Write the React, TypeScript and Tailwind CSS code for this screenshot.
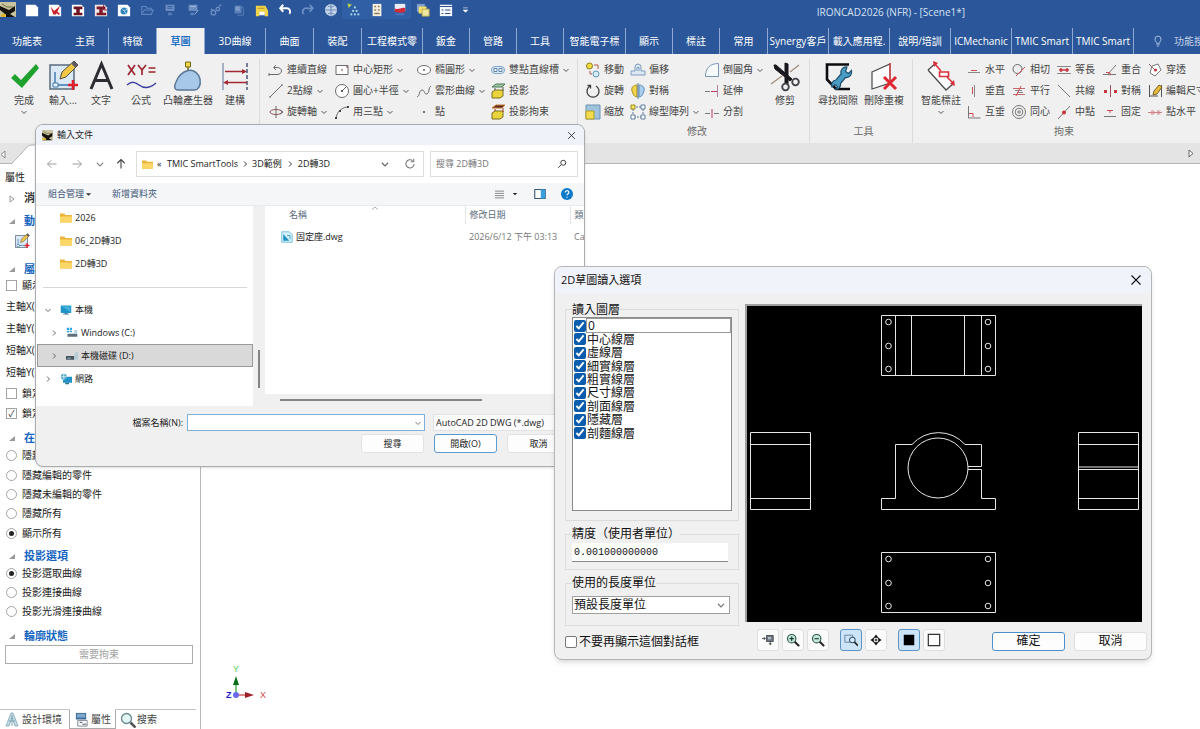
import React from "react";
import type { ReactNode } from "react";

const GLYPHS: Record<string, ReactNode> = {
  /* quick access, 16 x 16 */
  app: (<><rect width="16" height="15" fill="#c9c4a0" /><path d="M0 4l9 4 6-4v5l-5 3 5 3H1l4-3-5-4z" fill="#16130c" /><path d="M2 2l5 3h6" stroke="#6f6a4a" fill="none" /><path d="M1 12h5v3H1z" fill="#e0b52e" /></>),
  newdoc: <path d="M1 2h11l3 3v10H1z" fill="#fff" />,
  redv: (<><path d="M1 2h11l3 3v10H1z" fill="#fff" /><path d="M3 4l4 5 7-6-5 10H6z" fill="#c8202c" /><path d="M8 9l5 4" stroke="#c8202c" strokeWidth="2" /></>),
  redi: (<><path d="M1 2h11l3 3v10H1z" fill="#fff" /><path d="M3 4h10v3H10v4h3v3H3v-3h3V7H3z" fill="#6e1420" /></>),
  redi2: (<><path d="M1 2h11l3 3v10H1z" fill="#f3e6e8" /><path d="M3 4h10v3h-3v4h4v3H3v-3h3V7H3z" fill="#7d1a2a" /><path d="M11 2v6h4" fill="none" stroke="#7d1a2a" /></>),
  camdoc: (<><path d="M1 2h11l3 3v10H1z" fill="#fff" /><circle cx="8" cy="9" r="4" fill="#2f82b5" /><path d="M3 4l5 5 5-3M8 9l3 4" stroke="#b7dcf0" fill="none" /></>),
  open: <path d="M2 4h5l1 2h5v2h2l-2 5H2zM3 11l2-3h8" fill="none" stroke="#5f84bd" strokeWidth="1.300" />,
  save: (<><path d="M3 2h10v7H3z" fill="#6d8fc4" /><path d="M5 4h6M5 6h6" stroke="#2b579a" /><path d="M6 11h4v3H6z" fill="#5a7fb8" /></>),
  saveas: (<><path d="M3 2h10v7H3z" fill="#6d8fc4" /><path d="M5 4h6M10 13l4-5" stroke="#a9bfe0" /><path d="M5 11h4v3H5z" fill="#5a7fb8" /></>),
  link: (<g fill="none" stroke="#6d8fc4" strokeWidth="1.400"><circle cx="5" cy="11" r="2.600" /><circle cx="10" cy="7" r="2" /><path d="M11 4l3-2M2 7l3 1" /></g>),
  cube: (<><path d="M3 3h8v9H3z" fill="#5a7fb8" /><path d="M4 4h5v5H4z" fill="#7d9ccb" /><path d="M11 5h2v9H6" fill="none" stroke="#5a7fb8" /></>),
  print: (<><path d="M1 3h11l3 6v6h-4v-3H5v3H1z" fill="#f0d34a" /><path d="M5 10h6v4H5z" fill="#fff" /><path d="M3 6h8" stroke="#a98e20" /></>),
  undo: <path d="M6 2L2.500 6 6 10M3 6h6.500a4 4 0 0 1 3.500 6.500" fill="none" stroke="#fff" strokeWidth="2.200" />,
  redo: <path d="M10 2l3.500 4-3.500 4M13 6H7a4 4 0 0 0-4 6.500" fill="none" stroke="#6d8fc4" strokeWidth="2" />,
  sphere: (<><circle cx="8" cy="8" r="7" fill="#c6d4e8" /><path d="M1 8h14M8 1v14M4 3c2 2 6 2 8 0M4 13c2-2 6-2 8 0" stroke="#5f82b5" fill="none" /></>),
  tree: (<><path d="M1 1l4 1-3 3z" fill="#d9e36a" stroke="#9fc14a" /><g fill="#a8d8e8"><circle cx="9" cy="5" r="1.200" /><circle cx="7" cy="9" r="1.200" /><circle cx="11" cy="9" r="1.200" /><circle cx="5" cy="13" r="1.200" /><circle cx="9" cy="13" r="1.200" /><circle cx="13" cy="13" r="1.200" /></g></>),
  sheet: (<><path d="M3 1h10v14H3z" fill="#f3f0e2" /><path d="M5 4h2M9 4h2M5 8h2M9 8h2M5 12h6" stroke="#8f7a50" strokeWidth="1.500" /></>),
  flag: (<><path d="M2 1h12v8H2z" fill="#e8eef8" /><path d="M2 6c4 3 8-2 12 0v4c-4 2-8 1-12 0z" fill="#d12b3a" /><path d="M3 13h10" stroke="#4a76bd" strokeWidth="2" /></>),
  layers: (<><path d="M1 1h9v9H1z" fill="#7f9ed0" /><path d="M3 4h9v8H3z" fill="#f2e06a" /><path d="M7 7h8v8H7z" fill="#efe6a0" stroke="#b6a64a" /></>),
  listwin: (<><path d="M1 2h14v13H1z" fill="#f4f7fb" /><path d="M1 4h14M3 8h2M7 8h6M3 12h2M7 12h6" stroke="#33538a" strokeWidth="1.300" /></>),
  more: <path d="M4 5h8M4 9h8l-4 4z" stroke="#fff" fill="#fff" strokeWidth="1" />,

  /* ribbon, 32 x 32 */
  ok: <path d="M3 18l4-4 6 6L28 4l3 4-17 20z" fill="#1fa12e" />,
  sketch: (<><path d="M3 5h24v24H3z" fill="#dbe8f5" stroke="#5a6b7d" strokeWidth="1.500" /><path d="M8 12v13h13" fill="none" stroke="#3d78ad" strokeWidth="1.400" /><path d="M6 23h5v4H6z" fill="#e9f3fb" stroke="#3d78ad" /><path d="M13 19l2-7L27 1l4 4-12 12z" fill="#f2c744" stroke="#54504a" /><path d="M27 1l4 4-3 2.500L24.500 4z" fill="#5c5c66" /><path d="M26 20v10M21 25h10" stroke="#e0202a" strokeWidth="2.600" /></>),
  bigA: (<path d="M6 29L16.500 4 27 29M10 20.500h13" fill="none" stroke="#2c2c33" strokeWidth="3" />),
  formula: (<><g fill="none" stroke="#9c2530" strokeWidth="1.700"><path d="M3 5l7 10M10 5L3 15M13 5l4 5 4-5M17 10v5M23.500 8h7M23.500 12h7" /></g><path d="M2 25c5-4 8-3 12 0s10 4 17-2" fill="none" stroke="#3a3aa0" strokeWidth="1.500" /></>),
  cam: (<><path d="M13.500 2h5v5h-5z" fill="#f0d743" stroke="#71661c" /><path d="M16 7v4" stroke="#71661c" strokeWidth="1.500" /><path d="M16 10.500C22 9 27 14 28 19c1 6-1 11-6 11H6c-4 0-4-4-2-8 2-5 6-10 12-11.500z" fill="#a8c8ea" stroke="#5b7796" strokeWidth="1.500" /></>),
  construct: (<><path d="M4 3v27" stroke="#7d8dab" strokeWidth="1.300" /><path d="M28 3v27" stroke="#555f85" strokeWidth="1.600" strokeDasharray="4 2" /><path d="M6 11.500h20M8 22.500h20" stroke="#a12a35" strokeWidth="1.300" /><path d="M23 9l5 2.500-5 2.500zM9 20l-5 2.500L9 25z" fill="#a12a35" /></>),
  trim: (<><path d="M2 24l11-8M21 12L30 5" stroke="#a08a78" strokeWidth="1.200" /><path d="M5 5l2 0 16 14-2 2L6 9zM16 3l3 1 0 20-3-1z" fill="#17171c" stroke="#17171c" /><g fill="none" stroke="#3f4147" strokeWidth="1.800"><circle cx="16.500" cy="27" r="3.300" /><circle cx="26.500" cy="22" r="3.300" /></g></>),
  gap: (<><path d="M27 4.500H5v15l9 9.500h14" fill="none" stroke="#0c0c10" strokeWidth="2.600" /><path d="M25 7a5.500 5.500 0 0 0-6 7l-5 6a5 5 0 0 0-4 7l3-2.500 2.500 2-2 3a5 5 0 0 0 5-6l5-6a5.500 5.500 0 0 0 6-7l-3 3-3-2z" fill="#4a9cc4" stroke="#20506e" strokeWidth="1.200" /></>),
  deldup: (<><path d="M4 12l18-8v19L4 29z" fill="#fafafa" stroke="#4a4a4a" strokeWidth="1.200" /><path d="M22 3v22" stroke="#e04048" strokeWidth="1.400" /><path d="M16 17l12 12M28 17L16 29" stroke="#e0272f" strokeWidth="3" /></>),
  smartdim: (<><path d="M3 10l18 20 8-7L11 3z" fill="#fff" /><path d="M3 10l18 20 8-7M3 10l8-7" fill="none" stroke="#4c4c50" strokeWidth="1.300" /><path d="M10 4l6 7M22 17l6 6" stroke="#d83038" strokeWidth="1.600" /><path d="M14.500 12h9v4.500h-9z" fill="#fff" stroke="#d83038" strokeWidth="1.600" /><path d="M8 1l5 2-4 4zM30 26l-1-6-4 4z" fill="#d83038" /></>),

  /* ribbon, 16 x 16 */
  pline: <path d="M1 12.500h8c6 0 6-7 0-7H6M8 3L5.500 5.500 8 8M1 11v3" fill="none" stroke="#6a6a70" />,
  line: <path d="M2 14L14 2M1 14h2M13 2h2" fill="none" stroke="#6a6a70" />,
  axis: (<><ellipse cx="8" cy="8" rx="6" ry="2.500" fill="none" stroke="#8f5258" /><path d="M8 2v12M12 6l3 2-3 2" fill="none" stroke="#6a6a70" /></>),
  crect: (<><path d="M2 3.500h12v9H2z" fill="#fff" stroke="#6a6a70" /><path d="M7 8h2M12 5h2" stroke="#8f3a42" /></>),
  ccirc: (<><circle cx="8" cy="8" r="6.500" fill="#fff" stroke="#6a6a70" /><path d="M8 8l4-4" stroke="#6a6a70" /><circle cx="8" cy="8" r="1" fill="#333" /></>),
  arc3: (<><path d="M2 14C3 8 7 4 13 3" fill="none" stroke="#6a6a70" /><path d="M1 13h2v2H1zM5 6h2v2H5zM13 2h2v2h-2z" fill="#46464a" /></>),
  ellipse: (<><ellipse cx="8" cy="8" rx="6.500" ry="4.500" fill="#fff" stroke="#6a6a70" /><path d="M8 7v2M7 8h2" stroke="#6a6a70" /></>),
  spline: <path d="M1 14c3-1 2-7 5-7s2 5 5 4 1-7 4-8" fill="none" stroke="#6a6a70" />,
  point: <path d="M7 7h2v2H7z" fill="#777" />,
  slot: (<><rect x="1.500" y="4.500" width="13" height="7" rx="3.500" fill="#dcebf8" stroke="#7da4c9" /><path d="M4 6.500h3v3H4zM9 6.500h3v3H9z" fill="#fff" stroke="#5d86ad" /></>),
  project: (<><path d="M2 4l4-3h9l-3 3z" fill="#9fc7a5" stroke="#4c7a57" /><path d="M2 9l3-2h8v6l-3 2H2z" fill="#e9d43c" stroke="#7b6f21" /><path d="M5 7v-2M13 8V4" stroke="#555" /></>),
  projcon: (<><path d="M2 4l4-3h9l-3 3z" fill="#5a2b20" stroke="#c77b35" /><path d="M2 9l3-2h8v6l-3 2H2z" fill="#e9d43c" stroke="#7b6f21" /><path d="M5 7v-2M13 8V4" stroke="#b03a2a" /></>),
  move: (<><circle cx="4.500" cy="4" r="3" fill="#f0dc3c" stroke="#8d8122" /><circle cx="11" cy="12" r="3" fill="#d9eaf7" stroke="#6096be" /><path d="M9 3h4v4M5 9v3h2" fill="none" stroke="#b5544b" /></>),
  rotate: <path d="M5 3A6 6 0 1 0 11 3M2.500 2.500h3v3" fill="none" stroke="#3c3c40" strokeWidth="1.300" />,
  scale: (<><path d="M1 1h14v14H1z" fill="#9fc2dd" stroke="#6d93b3" /><path d="M1 7h8v8H1z" fill="#f2dc4c" stroke="#b09d25" /></>),
  offset: (<g fill="#dbe8f4" stroke="#7f9dbd"><path d="M5 9V5a3 3 0 0 1 6 0v4h4v4H1V9z" /><path d="M7 9V5.500h2V9" fill="none" /></g>),
  mirror: (<><path d="M7 2C3 2 1 5 2 8s2 6 5 6z" fill="#f0d44a" stroke="#a78f28" /><path d="M9 2c4 0 6 3 5 6s-2 6-5 6z" fill="#a9cdec" stroke="#5e8fbb" /><path d="M8 0v16" stroke="#55779a" /></>),
  array: (<g fill="#fff" stroke="#5f7ba0"><path d="M3 3h10v10H3z" fill="none" strokeDasharray="2 1" /><path d="M1 1h4v4H1z" stroke="#9a8a1b" fill="#f4e765" /><path d="M11 1h4v4h-4zM1 11h4v4H1zM11 11h4v4h-4z" /></g>),
  fillet: <path d="M1.500 14.500C1.500 6 6 1.500 14.500 1.500v13z" fill="#f7fafc" stroke="#7796b4" />,
  extend: (<><path d="M1 8.500h5" stroke="#777" /><path d="M7 8.500h6" stroke="#c03c66" /><path d="M13.500 2v12" stroke="#b880a0" /></>),
  split: (<><path d="M1 9.500h5M10 9.500h5" stroke="#777" /><path d="M8 5v9" stroke="#c03c66" /></>),
  horiz: (<><path d="M2 10.500h12" stroke="#888" /><path d="M5 8.500h6" stroke="#d24a52" /></>),
  vert: (<><path d="M8.500 2v12" stroke="#888" /><path d="M6.500 4v7" stroke="#d24a52" /></>),
  perp: (<><path d="M2.500 2v12h12" fill="none" stroke="#777" /><path d="M3 9.500h4V13" fill="none" stroke="#d24a52" /></>),
  tangent: (<><circle cx="6.500" cy="7" r="4.500" fill="none" stroke="#666" /><path d="M5 14L14 5" stroke="#d24a52" /></>),
  para: (<><path d="M2 5.500h12M2 11.500h12" stroke="#c46a70" /><path d="M4 7.500h7M6 9.500h6" stroke="#888" /><path d="M5 13l5-10" stroke="#d24a52" /></>),
  conc: (<g fill="none" stroke="#777"><circle cx="8" cy="8" r="6.500" /><circle cx="8" cy="8" r="3.800" /><circle cx="8" cy="8" r="1.200" /></g>),
  equal: (<><path d="M1 4.500h14M1 11.500h14" stroke="#888" /><path d="M3 8h10M5 6v4M11 6v4" stroke="#c8343c" strokeWidth="1.500" /></>),
  colin: <path d="M2 2l12 12" stroke="#777" />,
  mid: (<><path d="M2 15L14 2" stroke="#777" /><circle cx="8" cy="8.500" r="2" fill="#c8343c" /></>),
  coin: (<><path d="M1 12.500h13M6 12L14 3" fill="none" stroke="#777" /><path d="M4 10.500h4v3" fill="none" stroke="#d24a52" /></>),
  sym: (<><path d="M8.500 2v12" stroke="#a05058" /><path d="M2 7h3v3H2zM12 7h3v3h-3z" fill="#c8343c" /></>),
  fix: (<><path d="M2 12.500h12" stroke="#777" /><path d="M5 6.500h6M8 7v2" stroke="#d24a52" /></>),
  pierce: (<><path d="M5 4l6-2 3 6-6 6-5-3z" fill="#fff" stroke="#777" /><path d="M2 2l6 6" fill="none" stroke="#a06a6a" /><circle cx="8.500" cy="8" r="1.500" fill="#c8343c" /></>),
  editdim: (<><path d="M2.500 2v12M14.500 2v12M2 13h9" stroke="#555" fill="none" /><path d="M6 12l1-4 5-6 3 2-5 7z" fill="#e7b93c" stroke="#7a6220" /></>),
  ptH: <path d="M1 8.500h14M5 6v5M11 6v5M6 6.500l2 2-2 2M13 6.500l-2 2 2 2" fill="none" stroke="#d28088" />,

  /* dialogs */
  pc: (<><rect x="1" y="2" width="14" height="10" rx="1" fill="#1d93c8" /><path d="M2 3h12v8z" fill="#55c3e6" opacity=".6" /><path d="M6 12h4v1h2v1H4v-1h2z" fill="#3f7f9b" /></>),
  winDrive: (<><path d="M1 1h3v3H1zM5 1h3v3H5zM1 5h3v2H1zM5 5h3v2H5z" fill="#2aa3df" /><path d="M2 9h13v4H2z" fill="#5d6f7c" /><path d="M11 4h4v5h-4z" fill="#b7d4e4" /></>),
  drive: (<><path d="M0 8h11v5H0z" fill="#4a545c" /><path d="M11 8l1-5h4v10h-5z" fill="#b5cbd8" /><path d="M2 11h4" stroke="#9fe0ff" /></>),
  network: (<><rect x="4" y="5" width="12" height="8" fill="#1d93c8" /><circle cx="5" cy="5" r="4" fill="#58a9c8" /><path d="M1 5h8M5 1v8" stroke="#e0f3fa" /><path d="M7 13h5v2H7z" fill="#2a6f8c" /></>),
  folder: (<><path d="M0 2h6l1 2h9v10H0z" fill="#e9b53a" /><path d="M0 6h16v8H0z" fill="#fbd768" /></>),
  dwg: (<><path d="M1 1h10l4 4v10H1z" fill="#d4effa" stroke="#5bb3d6" /><path d="M3 4l8 9H3z" fill="#2191c4" /><path d="M8 6h4v5" stroke="#2191c4" fill="none" /></>),
  left: <path d="M14 8H2M7 3L2 8l5 5" fill="none" stroke="currentColor" strokeWidth="1.300" />,
  right: <path d="M2 8h12M9 3l5 5-5 5" fill="none" stroke="currentColor" strokeWidth="1.300" />,
  up: <path d="M8 14V2M3 7l5-5 5 5" fill="none" stroke="currentColor" strokeWidth="1.500" />,
  down: <path d="M3 6l5 5 5-5" fill="none" stroke="currentColor" strokeWidth="1.800" />,
  next: <path d="M6 3l5 5-5 5" fill="none" stroke="currentColor" strokeWidth="1.800" />,
  caretUp: <path d="M2 11l6-5 6 5" fill="none" stroke="currentColor" strokeWidth="1.300" />,
  refresh: <path d="M13.500 8a5.500 5.500 0 1 1-2-4.500M13 1v4H9" fill="none" stroke="currentColor" strokeWidth="1.400" />,
  search: (<><circle cx="10" cy="6" r="4" fill="none" stroke="currentColor" strokeWidth="1.600" /><path d="M7 9l-5 5" stroke="currentColor" strokeWidth="1.600" /></>),
  close: <path d="M2 2l12 12M14 2L2 14" stroke="currentColor" strokeWidth="1.500" />,
  rows: <path d="M0 2h16M0 6h16M0 10h16M0 14h16" stroke="#777" strokeWidth="1.500" />,
  pane: (<><path d="M1 2h14v12H1z" fill="#fff" stroke="#3c5b78" strokeWidth="1.500" /><path d="M9 2h6v12H9z" fill="#3aa0dd" /></>),
  help: (<><circle cx="8" cy="8" r="8" fill="#0f79c9" /><path d="M5.500 6a2.500 2.300 0 1 1 3.500 2c-.8.400-1 .8-1 1.800M8 11.500v1.500" fill="none" stroke="#fff" strokeWidth="1.500" /></>),
  dropTri: <path d="M2 5h12l-6 6z" fill="currentColor" />,
  fit: (<><path d="M6 2h9v8H6z" fill="#6f7782" stroke="#33363c" /><path d="M8 4h4v3H8z" fill="#b9c0c8" /><path d="M0 6h5M3 4v4M11 10v5M9 13h4" stroke="#333" fill="none" /></>),
  zoomIn: (<><circle cx="6.500" cy="6.500" r="4.800" fill="#c8e8da" stroke="#2c5a4b" strokeWidth="1.300" /><path d="M4 6.500h5M6.500 4v5" stroke="#174031" strokeWidth="1.300" /><path d="M10 10l5 5" stroke="#222" strokeWidth="2.400" /></>),
  zoomOut: (<><circle cx="6.500" cy="6.500" r="4.800" fill="#c8e8da" stroke="#2c5a4b" strokeWidth="1.300" /><path d="M4 6.500h5" stroke="#174031" strokeWidth="1.300" /><path d="M10 10l5 5" stroke="#222" strokeWidth="2.400" /></>),
  zoomBox: (<><path d="M1 2.500h9v8H1z" fill="none" stroke="#5f7c99" /><circle cx="9.500" cy="8" r="3.200" fill="#d9ecfa" stroke="#33546f" strokeWidth="1.200" /><path d="M12 10.500l4 4" stroke="#222" strokeWidth="2" /></>),
  pan: <path d="M8 1l3 4H5zM8 15l3-4H5zM1 8l4-3v6zM15 8l-4-3v6zM7 7h2v2H7z" fill="#111" stroke="#111" strokeWidth=".5" />,
  blackSq: <path d="M2 2h12v12H2z" fill="#000" />,
  whiteSq: <path d="M1.500 1.500h13v13h-13z" fill="#fff" stroke="#333" strokeWidth="1.400" />,
  bulb: <path d="M6 11c0-2-2-3-2-5.500a4 4 0 0 1 8 0C12 8 10 9 10 11zM6 13h4M7 15h2" fill="none" stroke="#a9bfe0" strokeWidth="1.300" />,
  env: (<><path d="M7 1h2l5 13h-3l-3-9-3 9H2z" fill="#c4dde5" stroke="#7fa6b4" strokeWidth=".8" /><path d="M5 9h6M8 3v11" stroke="#7fa6b4" /></>),
  props: (<><path d="M2 1h11v7H2z" fill="#3f6b9a" /><path d="M3 2h9v4H3z" fill="#7fa8d0" /><path d="M4 9h10v6H4z" fill="#fff" stroke="#7b8894" /><path d="M6 11h3M9 13h4" stroke="#445" /></>),
  find: (<><circle cx="6.500" cy="6.500" r="5" fill="#e2f4f4" stroke="#6b8a90" strokeWidth="1.300" /><path d="M10.500 10.500l5 5" stroke="#555" strokeWidth="2.600" /></>),
};

function Icon({ n, big, cls }: { n: string; big?: boolean; cls?: string }) {
  const box = big ? "0 0 32 32" : "0 0 16 16";
  return (
    <svg viewBox={box} aria-hidden="true" className={"shrink-0 " + (cls ?? (big ? "size-8" : "size-4"))}>
      {GLYPHS[n]}
    </svg>
  );
}

const QUICK: [string, boolean?][] = [
  ["newdoc"], ["redv"], ["redi"], ["redi2"], ["camdoc"], ["open"], ["save"], ["saveas"], ["link"], ["cube"],
  ["print"], ["undo"], ["redo"], ["sphere"], ["tree", true], ["sheet", true], ["flag", true], ["layers"], ["listwin"],
];

const TABS: [string, string][] = [
  ["特徵", "w-12"], ["草圖", "w-12"], ["3D曲線", "w-[61px]"], ["曲面", "w-12"], ["裝配", "w-12"],
  ["工程模式零", "w-[61px]"], ["鈑金", "w-[47px]"], ["管路", "w-[47px]"], ["工具", "w-[47px]"], ["智能電子標", "w-[62px]"],
  ["顯示", "w-[47px]"], ["標註", "w-[47px]"], ["常用", "w-12"], ["Synergy客戶", "w-[61px]"], ["載入應用程.", "w-[61px]"],
  ["說明/培訓", "w-[61px]"], ["ICMechanic", "w-[61px]"], ["TMIC Smart", "w-[61px]"], ["TMIC Smart", "w-[61px]"],
];

function Big({ n, label, w, drop }: { n: string; label: string; w: string; drop?: boolean }) {
  return (
    <button className={"flex shrink-0 flex-col items-center pt-px leading-4 whitespace-nowrap " + w}>
      <Icon n={n} big />
      <span>{label}</span>
      {drop && <Icon n="down" cls="size-2" />}
    </button>
  );
}

type Item = [string, string, boolean?];
function Col({ items, w }: { items: Item[]; w: string }) {
  return (
    <div className={"flex shrink-0 flex-col " + w}>
      {items.map(([n, label, drop]) => (
        <button key={label} className="flex h-[21px] items-center gap-[3px] whitespace-nowrap">
          <Icon n={n} />
          <span>{label}</span>
          {drop && <Icon n="down" cls="size-2" />}
        </button>
      ))}
    </div>
  );
}

function Group({ children, label, cls }: { children: ReactNode; label: string; cls: string }) {
  return (
    <section className={"flex shrink-0 flex-col border-r border-[#dcdcdc] " + cls}>
      <div className="flex h-[63px]">{children}</div>
      <div className="h-[18px] text-center leading-[18px] text-[#6b6b6b]">{label}</div>
    </section>
  );
}

function Header() {
  return (
    <header className="bg-[#2b579a] text-white">
      <div className="flex h-7 items-start justify-between overflow-hidden">
        <div className="flex shrink-0 items-center">
          <Icon n="app" cls="mr-1 h-4 w-4" />
          {QUICK.map(([n, on]) => (
            <button key={n} aria-label={n} className={"flex h-[19px] w-[23px] items-center justify-center " + (on ? "bg-[#315fa6]" : "")}>
              <Icon n={n} cls="size-[14px]" />
            </button>
          ))}
          <button aria-label="more" className="flex w-4 justify-center"><Icon n="more" cls="size-[9px]" /></button>
        </div>
        <h1 className="mr-[235px] text-[10px] leading-6 whitespace-nowrap text-[#d5e1f3]">IRONCAD2026 (NFR) - [Scene1*]</h1>
      </div>
      <nav className="flex h-[26px] overflow-hidden text-[10px]">
        <button className="w-[62px] shrink-0 pr-2">功能表</button>
        <button className="w-[47px] shrink-0 border-r border-[#8ea9d2]">主頁</button>
        {TABS.map(([t, w], i) => (
          <button
            key={i}
            className={
              "shrink-0 overflow-hidden border-r border-[#8ea9d2] text-center whitespace-nowrap " + w +
              (t === "草圖" ? " bg-[#f0f0f0] font-bold text-[#1f6fc4]" : "")
            }
          >
            <span className="flex justify-center">{t}</span>
          </button>
        ))}
        <div className="ml-[18px] flex shrink-0 items-center gap-2.5 text-[#c3d1e8]">
          <Icon n="bulb" cls="size-3" />
          <span>功能搜尋</span>
        </div>
      </nav>
    </header>
  );
}

function Ribbon() {
  return (
    <div className="flex h-[89px] overflow-hidden bg-[#f0f0f0] pt-[5px] text-[10px] text-[#444]">
      <Group label="" cls="w-[260px] pl-1">
        <Big n="ok" label="完成" w="w-10" drop />
        <Big n="sketch" label="輸入..." w="w-[38px]" />
        <Big n="bigA" label="文字" w="w-[38px]" />
        <Big n="formula" label="公式" w="w-[42px]" />
        <Big n="cam" label="凸輪產生器" w="w-[52px]" />
        <Big n="construct" label="建構" w="w-[42px]" />
      </Group>
      <Group label="" cls="w-[318px] pl-2">
        <Col w="w-[66px]" items={[["pline", "連續直線"], ["line", "2點線", true], ["axis", "旋轉軸", true]]} />
        <Col w="w-[82px]" items={[["crect", "中心矩形", true], ["ccirc", "圓心+半徑", true], ["arc3", "用三點", true]]} />
        <Col w="w-[74px]" items={[["ellipse", "橢圓形", true], ["spline", "雲形曲線", true], ["point", "點"]]} />
        <Col w="w-[84px]" items={[["slot", "雙點直線槽", true], ["project", "投影"], ["projcon", "投影拘束"]]} />
      </Group>
      <Group label="修改" cls="w-[232px] pl-[7px]">
        <Col w="w-[45px]" items={[["move", "移動"], ["rotate", "旋轉"], ["scale", "縮放"]]} />
        <Col w="w-[74px]" items={[["offset", "偏移"], ["mirror", "對稱"], ["array", "線型陣列", true]]} />
        <Col w="w-[62px]" items={[["fillet", "倒圓角", true], ["extend", "延伸"], ["split", "分割"]]} />
        <Big n="trim" label="修剪" w="w-[38px]" />
      </Group>
      <Group label="工具" cls="w-[103px] pl-[5px]">
        <Big n="gap" label="尋找間隙" w="w-[46px]" />
        <Big n="deldup" label="刪除重複" w="w-[46px]" />
      </Group>
      <Group label="拘束" cls="w-[300px] pl-[3px]">
        <Big n="smartdim" label="智能標註" w="w-[50px]" drop />
        <Col w="w-[45px]" items={[["horiz", "水平"], ["vert", "垂直"], ["perp", "互垂"]]} />
        <Col w="w-[45px]" items={[["tangent", "相切"], ["para", "平行"], ["conc", "同心"]]} />
        <Col w="w-[46px]" items={[["equal", "等長"], ["colin", "共線"], ["mid", "中點"]]} />
        <Col w="w-[45px]" items={[["coin", "重合"], ["sym", "對稱"], ["fix", "固定"]]} />
        <Col w="w-[60px]" items={[["pierce", "穿透"], ["editdim", "編輯尺寸"], ["ptH", "點水平"]]} />
      </Group>
    </div>
  );
}

function Strip() {
  return (
    <div className="flex h-[21px] justify-between border-b border-[#b4b4b4] bg-[#e4e4e4]">
      <svg viewBox="0 0 60 21" className="h-[21px] w-[60px]">
        <path d="M12 21C16 16 22 10 27 4q2-2 5-2h28v19z" fill="#fff" />
        <path d="M12 20C16 16 22 10 27 4q2-2 5-2h28" fill="none" stroke="#b4b4b4" />
        <path d="M5 8v7L1 11.500z" fill="#fff" stroke="#888" />
      </svg>
      <button aria-label="scroll right" className="mr-1 flex w-2.5 items-center">
        <svg viewBox="0 0 10 10" className="size-2.5"><path d="M3 2v7l4-3.500z" fill="#fff" stroke="#666" /></svg>
      </button>
    </div>
  );
}

function Section({ t, cls, closed }: { t: string; cls: string; closed?: boolean }) {
  return (
    <h3 className={"flex h-[15px] items-center text-[11px] font-bold " + cls + (closed ? " text-[#333]" : " text-[#1565c0]")}>
      <svg viewBox="0 0 8 8" className="mr-2 ml-2 size-2">
        {closed ? <path d="M2 1v6l4-3z" fill="#fff" stroke="#999" /> : <path d="M7 1v5H1z" fill="#9a9a9a" />}
      </svg>
      {t}
    </h3>
  );
}

function Choice({ type, name, label, on, h }: { type: "radio" | "checkbox"; name: string; label: string; on?: boolean; h?: string }) {
  const look = type === "radio"
    ? "rounded-full checked:before:size-[5px] checked:before:rounded-full checked:before:bg-[#222]"
    : "checked:before:text-[9px] checked:before:leading-none checked:before:text-[#333] checked:before:content-['✓']";
  return (
    <label className={"flex items-center gap-[5px] pl-1.5 whitespace-nowrap " + (h ?? "")}>
      <input type={type} name={name} defaultChecked={on} className={"flex size-[11px] shrink-0 appearance-none items-center justify-center border border-[#a4a4a4] bg-white " + look} />
      {label}
    </label>
  );
}

function Sidebar() {
  return (
    <aside className="flex w-[201px] shrink-0 flex-col border-r border-[#b8b8b8] text-[10px] text-[#222]">
      <h2 className="h-[26px] pl-[5px] leading-[26px]">屬性</h2>
      <Section t="消息" closed cls="mt-px" />
      <Section t="動作" cls="mt-2" />
      <button aria-label="edit sketch" className="mt-1 ml-[14px] w-4"><Icon n="sketch" big cls="size-4" /></button>
      <Section t="屬性" cls="mt-[13px]" />
      <Choice type="checkbox" name="show" label="顯示" h="h-[17px]" />
      <div className="pt-px">
        {["主軸X(L)", "主軸Y(L)", "短軸X(L)", "短軸Y(L)"].map((t) => (
          <div key={t} className="h-[22px] pl-1.5 leading-[22px]">{t}</div>
        ))}
      </div>
      <Choice type="checkbox" name="lock1" label="鎖定長度" h="h-5" />
      <Choice type="checkbox" name="lock2" label="鎖定角度" on h="h-5" />
      <Section t="在草圖中" cls="mt-2" />
      <div className="grid h-[97px] auto-rows-fr">
        <Choice type="radio" name="vis" label="隱藏零件" />
        <Choice type="radio" name="vis" label="隱藏編輯的零件" />
        <Choice type="radio" name="vis" label="隱藏未編輯的零件" />
        <Choice type="radio" name="vis" label="隱藏所有" />
        <Choice type="radio" name="vis" label="顯示所有" on />
      </div>
      <Section t="投影選項" cls="mt-1.5" />
      <Choice type="radio" name="proj" label="投影選取曲線" on h="h-[19px]" />
      <Choice type="radio" name="proj" label="投影連接曲線" h="h-[19px]" />
      <Choice type="radio" name="proj" label="投影光滑連接曲線" h="h-[19px]" />
      <Section t="輪廓狀態" cls="mt-2" />
      <button className="mt-px mr-[7px] ml-[5px] h-[19px] border border-[#adadad] text-[#a0a0a0]">需要拘束</button>
      <div className="mt-auto mr-1 flex h-5 text-[#444]">
        <button className="flex w-[69px] items-center gap-0.5 border-t border-[#c4c4c4] pl-1"><Icon n="env" />設計環境</button>
        <button className="flex w-[47px] items-center justify-center border border-[#aaa] border-t-transparent"><Icon n="props" cls="mr-0.5 size-[15px]" />屬性</button>
        <button className="flex flex-1 items-center gap-px border-t border-[#c4c4c4] pl-1"><Icon n="find" />搜索</button>
      </div>
    </aside>
  );
}

function Scene() {
  return (
    <main className="flex flex-1 items-end bg-white pb-6 pl-6">
      <svg viewBox="0 0 44 44" className="size-11" fontFamily="Liberation Sans, sans-serif" fontSize="9">
        <text x="8" y="11" fill="#4fd04f">Y</text>
        <text x="1" y="37" fill="#1c1cd0" fontWeight="bold">Z</text>
        <text x="35" y="37" fill="#d04848">X</text>
        <path d="M11 33V20" stroke="#4fb84f" strokeWidth="1.500" />
        <path d="M11 15l3 9H8z" fill="#0d6f1c" />
        <path d="M11 34h12" stroke="#d06060" strokeWidth="1.500" />
        <path d="M20 31l9 3-9 3z" fill="#a01f24" />
        <circle cx="11" cy="34" r="3" fill="#6a6af0" />
      </svg>
    </main>
  );
}

function TreeRow({ icon, t, arrow, pad, on }: { icon: string; t: string; arrow?: "down" | "next"; pad: string; on?: boolean }) {
  return (
    <button className={"flex h-[23px] w-[216px] items-center gap-[3px] border " + pad + (on ? " border-[#999] bg-[#d9d9d9]" : " border-transparent")}>
      {arrow ? <Icon n={arrow} cls="mr-[5px] size-2 text-[#555]" /> : <span className="mr-[5px] w-2" />}
      <Icon n={icon} cls="size-3" />
      {t}
    </button>
  );
}

const btn = "rounded-[3px] border bg-[#fdfdfd] text-center";

function FileDialog() {
  return (
    <div role="dialog" aria-label="輸入文件" className="absolute top-[124px] left-[35px] w-[550px] overflow-hidden rounded-lg border border-[#a8abb0] bg-[#f0f0f0] text-[9px] text-[#222] shadow-sm">
      <div className="flex h-5 items-center bg-[#f0f2f9] pr-2 pl-1.5">
        <Icon n="app" cls="mr-1 size-[11px]" />
        <span>輸入文件</span>
        <button aria-label="close" className="ml-auto"><Icon n="close" cls="size-[9px]" /></button>
      </div>
      <div className="flex h-[38px] items-center bg-white pr-1.5 pl-2.5">
        <button aria-label="back"><Icon n="left" cls="size-3 text-[#999]" /></button>
        <button aria-label="forward" className="ml-[13px]"><Icon n="right" cls="size-3 text-[#999]" /></button>
        <button aria-label="recent" className="ml-3"><Icon n="down" cls="size-2.5 text-[#888]" /></button>
        <button aria-label="up" className="ml-2.5"><Icon n="up" cls="size-3 text-[#444]" /></button>
        <div className="ml-[9px] flex h-[26px] w-[288px] items-center border border-[#dedede] pl-[5px]">
          <Icon n="folder" cls="mr-1 size-[11px]" />
          <span className="mr-1 w-1.5">«</span>
          <span>TMIC SmartTools</span>
          <Icon n="next" cls="mx-[3px] size-2" />
          <span>3D範例</span>
          <Icon n="next" cls="mx-1 size-2" />
          <span>2D轉3D</span>
          <button aria-label="history" className="ml-auto"><Icon n="down" cls="size-2.5 text-[#666]" /></button>
          <button aria-label="refresh" className="mr-[7px] ml-[14px]"><Icon n="refresh" cls="size-3 text-[#777]" /></button>
        </div>
        <label className="ml-1.5 flex h-[26px] flex-1 items-center border border-[#dedede] pr-2.5 pl-[5px]">
          <input aria-label="搜尋" placeholder="搜尋 2D轉3D" className="w-0 flex-1 outline-none placeholder:text-[#777]" />
          <Icon n="search" cls="size-2.5 text-[#444]" />
        </label>
      </div>
      <div className="flex h-[23px] items-center border-b border-[#e8eaee] bg-[#f5f6f8] pl-3 text-[#3f5878]">
        <button className="flex items-center gap-px">組合管理 <Icon n="dropTri" cls="size-[7px] text-[#333]" /></button>
        <button className="ml-5">新增資料夾</button>
        <button aria-label="view" className="ml-auto flex items-center gap-2"><Icon n="rows" cls="size-[9px]" /><Icon n="dropTri" cls="size-[6px] text-[#222]" /></button>
        <button aria-label="preview" className="ml-4"><Icon n="pane" cls="size-3" /></button>
        <button aria-label="help" className="mr-[11px] ml-[15px]"><Icon n="help" cls="size-3" /></button>
      </div>
      <div className="flex h-[200px]">
        <div className="w-[217px] bg-white pl-px">
          <TreeRow icon="folder" t="2026" pad="pl-1.5" />
          <TreeRow icon="folder" t="06_2D轉3D" pad="pl-1.5" />
          <TreeRow icon="folder" t="2D轉3D" pad="pl-1.5" />
          <div className="mx-1.5 mt-3 mb-2.5 border-t border-[#d8d8d8]" />
          <TreeRow icon="pc" t="本機" arrow="down" pad="pl-1.5" />
          <TreeRow icon="winDrive" t="Windows (C:)" arrow="next" pad="pl-3" />
          <TreeRow icon="drive" t="本機磁碟 (D:)" arrow="next" pad="pl-3" on />
          <TreeRow icon="network" t="網路" arrow="next" pad="pl-1.5" />
        </div>
        <div className="flex w-3 items-end justify-center pb-[18px]"><div className="h-[38px] w-0.5 bg-[#858585]" /></div>
        <div className="flex min-w-0 flex-1 flex-col">
          <div className="relative flex-1 bg-white">
            <Icon n="caretUp" cls="absolute -top-0.5 left-[106px] size-2 text-[#888]" />
            <table className="w-full table-fixed text-left">
              <thead className="text-[#5c6c80]">
                <tr className="h-[18px]">
                  <th className="w-[200px] border-r border-[#e5e5e5] pl-6 font-normal">名稱</th>
                  <th className="w-[105px] border-r border-[#e5e5e5] pl-1 font-normal">修改日期</th>
                  <th className="overflow-hidden pl-1 font-normal whitespace-nowrap">類型</th>
                </tr>
              </thead>
              <tbody>
                <tr className="h-[26px]">
                  <td className="pl-4"><span className="flex items-center gap-[3px]"><Icon n="dwg" cls="size-3" />固定座.dwg</span></td>
                  <td className="pl-1 whitespace-nowrap text-[#777]">2026/6/12 下午 03:13</td>
                  <td className="overflow-hidden pl-1 whitespace-nowrap text-[#777]">Cax</td>
                </tr>
              </tbody>
            </table>
          </div>
          <div className="flex h-3 items-center pl-[15px]"><div className="h-0.5 w-[202px] bg-[#858585]" /></div>
        </div>
      </div>
      <div className="flex h-[60px] flex-col gap-[3px] pt-2">
        <div className="flex h-[17px] items-center">
          <label htmlFor="fname" className="w-[151px] pr-1 text-right">檔案名稱(N):</label>
          <div className="flex h-[17px] w-[238px] items-center border border-[#7fb0dc] bg-white">
            <input id="fname" className="min-w-0 flex-1 px-1 outline-none" />
            <Icon n="down" cls="mr-0.5 size-2 text-[#666]" />
          </div>
          <select aria-label="檔案類型" className="ml-2 h-[17px] w-[140px] appearance-none border border-[#e2e2e2] bg-[#fbfbfb] px-0.5">
            <option>AutoCAD 2D DWG (*.dwg)</option>
          </select>
        </div>
        <div className="flex h-[19px] gap-2.5 pl-[325px]">
          <button className={btn + " w-[63px] border-[#e2e2e2]"}>搜尋</button>
          <button className={btn + " w-[63px] border-[#5b9bd5]"}>開啟(O)</button>
          <button className={btn + " w-[63px] border-[#e2e2e2]"}>取消</button>
        </div>
      </div>
    </div>
  );
}

const HOLES = [322, 346, 369];
function Drawing() {
  return (
    <svg viewBox="747 306 395 316" className="block w-full bg-black" fill="none" stroke="#e6e6e6" strokeWidth="1">
      <path d="M881.500 315.500h114v60h-114zM895.500 315v60M911.500 315v60M964.500 315v60M981.500 315v60" />
      <path d="M750.500 432.500h60v77h-60zM750 444.500h60M750 498.500h60" />
      <path d="M1078.500 432.500h60v77h-60zM1078 444.500h60M1078 467h60M1078 469.500h60M1078 498.500h60" />
      <path d="M895.500 498.500v-54h16.500a35.500 35.500 0 0 1 53 0h16.500v22H968M968 469.500h13.500v29h14v11h-114v-11h14" />
      <circle cx="938" cy="468" r="30" />
      <path d="M881.500 552.500h114v60h-114z" />
      {HOLES.map((y) => (
        <g key={y}>
          <circle cx="888.500" cy={y} r="2.800" /><circle cx="988" cy={y} r="2.800" />
          <circle cx="888.500" cy={y + 237} r="2.800" /><circle cx="988" cy={y + 237} r="2.800" />
        </g>
      ))}
    </svg>
  );
}

const LAYERS = ["0", "中心線層", "虛線層", "細實線層", "粗實線層", "尺寸線層", "剖面線層", "隱藏層", "剖麵線層"];
const TOOLS: [string, string][] = [
  ["fit", ""], ["zoomIn", ""], ["zoomOut", ""], ["zoomBox", "ml-2"], ["pan", ""], ["blackSq", "ml-2"], ["whiteSq", ""],
];

function ImportDialog() {
  return (
    <div role="dialog" aria-label="2D草圖讀入選項" className="absolute top-[266px] left-[554px] w-[598px] rounded-lg border border-[#b5b5b8] bg-[#f0f0f0] text-[12px] text-[#111] shadow-md">
      <div className="flex h-[26px] items-center rounded-t-lg bg-[#f1f3fa] pr-[9px] pl-1.5 text-[11px]">
        2D草圖讀入選項
        <button aria-label="close" className="ml-auto"><Icon n="close" cls="size-3" /></button>
      </div>
      <div className="flex pt-[10px] pb-2">
        <div className="w-[190px] shrink-0 pl-2.5">
          <fieldset className="h-[218px] w-[174px] border border-[#dcdcdc] px-1.5 leading-[13px]">
            <legend className="leading-[13px]">讀入圖層</legend>
            <div className="mt-px h-[194px] border border-[#8a8a8a] bg-white pt-px">
              <div className="grid h-[121px] auto-rows-fr">
                {LAYERS.map((l, i) => (
                  <label key={l} className="flex items-center pl-px">
                    <input type="checkbox" defaultChecked className="size-3 shrink-0 accent-[#0b5cad]" />
                    <span className={"flex-1 pl-px leading-[13px] " + (i === 0 ? "border border-[#999]" : "")}>{l}</span>
                  </label>
                ))}
              </div>
            </div>
          </fieldset>
          <fieldset className="mt-1.5 h-[43px] w-[174px] border border-[#dcdcdc] px-1.5">
            <legend className="leading-[14px]"><label htmlFor="prec">精度（使用者單位）</label></legend>
            <input id="prec" defaultValue="0.001000000000" className="mt-0.5 block h-[19px] w-[156px] border-b border-[#8a8a8a] bg-white px-0.5 font-['Liberation_Mono',monospace] text-[10px] outline-none" />
          </fieldset>
          <fieldset className="mt-1.5 h-[50px] w-[174px] border border-[#dcdcdc] px-1.5">
            <legend className="leading-[14px]"><label htmlFor="unit">使用的長度單位</label></legend>
            <div className="relative mt-1.5">
              <select id="unit" className="block h-[18px] w-[158px] appearance-none border border-[#a0a0a0] bg-white pl-px leading-4">
                <option>預設長度單位</option>
              </select>
              <Icon n="down" cls="absolute top-1 right-1.5 size-2.5 text-[#777]" />
            </div>
          </fieldset>
          <label className="mt-2 flex items-center gap-0.5 whitespace-nowrap leading-4">
            <input type="checkbox" className="size-3 appearance-none rounded-[2px] border border-[#777] bg-white" />
            不要再顯示這個對話框
          </label>
        </div>
        <div className="min-w-0 flex-1 pt-px pr-1">
          <div className="mr-[5px] border-t-2 border-l-2 border-[#a0a0a0]"><Drawing /></div>
          <div className="mt-[7px] flex items-center pl-3">
            <div className="flex gap-[3px]">
              {TOOLS.map(([n, m]) => {
                const on = n === "zoomBox" || n === "blackSq";
                return (
                  <button key={n} aria-label={n} className={"flex size-[22px] items-center justify-center rounded-[3px] border " + m + (on ? " border-[#5b93c7] bg-[#cce4f7]" : " border-[#dedede] bg-[#fbfbfb]")}>
                    <Icon n={n} cls={n === "fit" || n === "pan" ? "size-3" : "size-[14px]"} />
                  </button>
                );
              })}
            </div>
            <button className={btn + " mt-0.5 ml-auto h-[19px] w-[73px] border-[#4a90cf] leading-4"}>確定</button>
            <button className={btn + " mt-0.5 ml-[9px] h-[19px] w-[73px] border-[#dedede] leading-4"}>取消</button>
          </div>
        </div>
      </div>
    </div>
  );
}

export default function App() {
  return (
    <div className="relative flex min-h-screen w-full flex-col overflow-hidden bg-white font-['Open_Sans','Noto_Sans_CJK_TC',sans-serif]">
      <Header />
      <Ribbon />
      <Strip />
      <div className="flex flex-1">
        <Sidebar />
        <Scene />
      </div>
      <FileDialog />
      <ImportDialog />
    </div>
  );
}
